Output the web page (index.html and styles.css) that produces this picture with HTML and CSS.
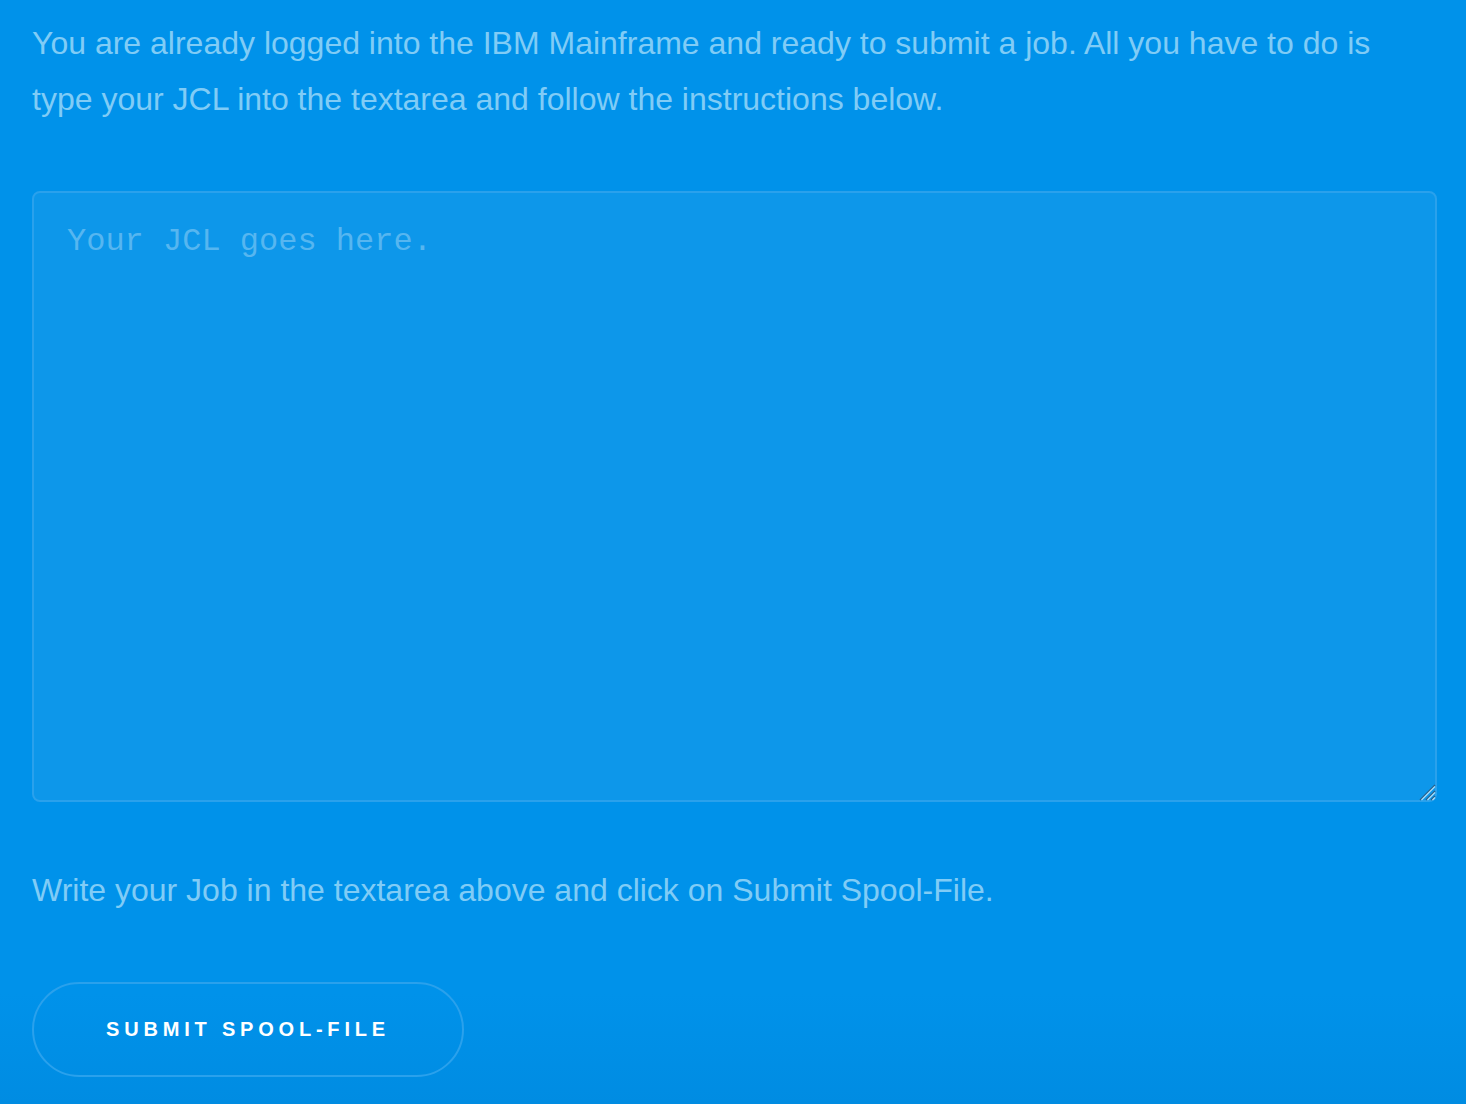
FILE: index.html
```html
<!DOCTYPE html>
<html>
<head>
<meta charset="utf-8">
<link rel="stylesheet" href="styles.css">
</head>
<body>
<main class="page">
  <p class="lead">You are already logged into the IBM Mainframe and ready to submit a job. All you have to do is type your JCL into the textarea and follow the instructions below.</p>
  <div class="editor">
    <textarea class="jcl" placeholder="Your JCL goes here."></textarea>
    <svg class="grip" width="20" height="20" viewBox="0 0 20 20" aria-hidden="true">
      <line x1="19" y1="4" x2="4" y2="19" stroke="#2b5f86" stroke-width="1.4"/>
      <line x1="19" y1="5.5" x2="5.5" y2="19" stroke="#a9dcfa" stroke-width="1.2"/>
      <line x1="19" y1="10" x2="10" y2="19" stroke="#2b5f86" stroke-width="1.4"/>
      <line x1="19" y1="11.5" x2="11.5" y2="19" stroke="#a9dcfa" stroke-width="1.2"/>
      <line x1="19" y1="15" x2="15" y2="19" stroke="#2b5f86" stroke-width="1.4"/>
      <line x1="19" y1="16.5" x2="16.5" y2="19" stroke="#a9dcfa" stroke-width="1.2"/>
    </svg>
  </div>
  <p class="hint">Write your Job in the textarea above and click on Submit Spool-File.</p>
  <button class="submit" type="button">Submit Spool-File</button>
</main>
</body>
</html>
```

FILE: styles.css
```css
html, body {
  margin: 0;
  padding: 0;
  height: 100%;
}
body {
  background: linear-gradient(180deg, #0092ea 0%, #0092ea 90%, #008ce2 100%);
  font-family: "Liberation Sans", Arial, sans-serif;
  overflow: hidden;
}
.page {
  padding: 15px 29px 0 32px;
  display: flex;
  flex-direction: column;
  align-items: flex-start;
}
.lead, .hint {
  margin: 0;
  font-size: 32px;
  line-height: 56px;
  color: #80ccf6;
}
.lead {
  max-width: 1370px;
}
.editor {
  position: relative;
  margin-top: 64px;
  width: 100%;
  height: 611px;
}
.jcl {
  display: block;
  box-sizing: border-box;
  width: 100%;
  height: 100%;
  margin: 0;
  padding: 30px 33px;
  background: #0d97ea;
  border: 2px solid #2aa1ec;
  border-radius: 8px;
  font-family: "Liberation Mono", "Courier New", monospace;
  font-size: 32px;
  color: #ffffff;
  outline: none;
  resize: none;
}
.jcl::placeholder {
  color: #56b6f0;
}
.grip {
  position: absolute;
  right: 1px;
  bottom: 1px;
  pointer-events: none;
}
.hint {
  margin-top: 60px;
}
.submit {
  margin-top: 64px;
  box-sizing: border-box;
  width: 432px;
  height: 95px;
  border: 2px solid #2aa1ec;
  border-radius: 48px;
  background: transparent;
  color: #ffffff;
  font-family: "Liberation Sans", Arial, sans-serif;
  font-weight: bold;
  font-size: 20px;
  letter-spacing: 4.8px;
  text-transform: uppercase;
  padding: 0;
}
```
